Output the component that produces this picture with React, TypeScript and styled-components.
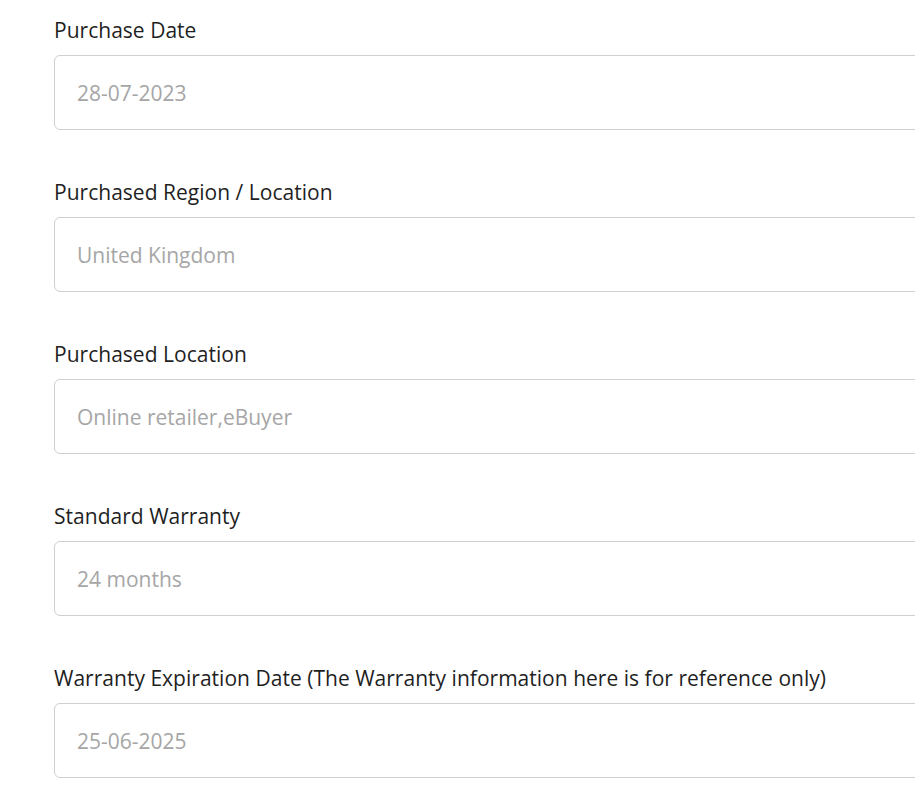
import React from "react";
import styled, { createGlobalStyle } from "styled-components";

const GlobalStyle = createGlobalStyle`
  html, body {
    margin: 0;
    padding: 0;
    background: #ffffff;
    overflow: hidden;
  }
  body {
    font-family: "Open Sans", "Noto Sans", "Liberation Sans", sans-serif;
  }
`;

const Form = styled.form`
  width: 1100px;
  padding: 15px 0 0 54px;
  display: flex;
  flex-direction: column;
  gap: 47px;
`;

const Field = styled.div`
  display: flex;
  flex-direction: column;
  gap: 10px;
`;

const Label = styled.label`
  font-size: 21px;
  line-height: 30px;
  letter-spacing: 0.02px;
  color: #1f1f1f;
`;

const Input = styled.input`
  box-sizing: border-box;
  width: 100%;
  height: 75px;
  padding: 0 22px;
  border: 1px solid #cfcfcf;
  border-radius: 6px;
  background: #ffffff;
  font-family: inherit;
  font-size: 21px;
  color: #a6a6a6;
  outline: none;
`;

const fields = [
  { label: "Purchase Date", value: "28-07-2023" },
  { label: "Purchased Region / Location", value: "United Kingdom" },
  { label: "Purchased Location", value: "Online retailer,eBuyer" },
  { label: "Standard Warranty", value: "24 months" },
  {
    label:
      "Warranty Expiration Date (The Warranty information here is for reference only)",
    value: "25-06-2025",
  },
];

const App: React.FC = () => {
  return (
    <>
      <GlobalStyle />
      <Form>
        {fields.map((f) => (
          <Field key={f.label}>
            <Label>{f.label}</Label>
            <Input type="text" value={f.value} readOnly />
          </Field>
        ))}
      </Form>
    </>
  );
};

export default App;
